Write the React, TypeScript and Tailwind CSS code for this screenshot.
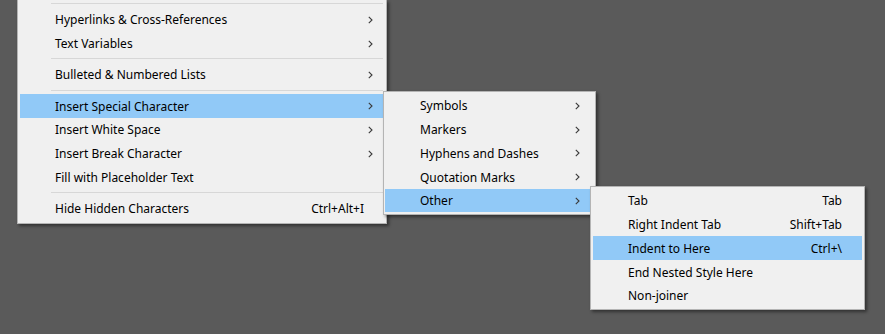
import React from "react";

type Item =
  | { type: "sep" }
  | { type: "item"; label: string; sub?: boolean; shortcut?: string; active?: boolean };

const Chevron = () => (
  <svg width="5" height="8" viewBox="0 0 5 8" className="block -mt-[1px]">
    <path d="M0.8 0.8 L4 4 L0.8 7.2" fill="none" stroke="#3a3a3a" strokeWidth="1.1" />
  </svg>
);

function Row({ it, padL, arrowR }: { it: Extract<Item, { type: "item" }>; padL: string; arrowR: string }) {
  return (
    <div
      className={`flex h-[23.75px] items-center pt-[2px] ${padL} ${arrowR} ${
        it.active ? "bg-[#91c9f7]" : ""
      }`}
    >
      <span className="flex-1 whitespace-nowrap">{it.label}</span>
      {it.shortcut && <span className="whitespace-nowrap">{it.shortcut}</span>}
      {it.sub && <Chevron />}
    </div>
  );
}

const mainItems: Item[] = [
  { type: "item", label: "Hyperlinks & Cross-References", sub: true },
  { type: "item", label: "Text Variables", sub: true },
  { type: "sep" },
  { type: "item", label: "Bulleted & Numbered Lists", sub: true },
  { type: "sep" },
  { type: "item", label: "Insert Special Character", sub: true, active: true },
  { type: "item", label: "Insert White Space", sub: true },
  { type: "item", label: "Insert Break Character", sub: true },
  { type: "item", label: "Fill with Placeholder Text" },
  { type: "sep" },
  { type: "item", label: "Hide Hidden Characters", shortcut: "Ctrl+Alt+I" },
];

const sub1: Item[] = [
  { type: "item", label: "Symbols", sub: true },
  { type: "item", label: "Markers", sub: true },
  { type: "item", label: "Hyphens and Dashes", sub: true },
  { type: "item", label: "Quotation Marks", sub: true },
  { type: "item", label: "Other", sub: true, active: true },
];

const sub2: Item[] = [
  { type: "item", label: "Tab", shortcut: "Tab" },
  { type: "item", label: "Right Indent Tab", shortcut: "Shift+Tab" },
  { type: "item", label: "Indent to Here", shortcut: "Ctrl+\\", active: true },
  { type: "item", label: "End Nested Style Here" },
  { type: "item", label: "Non-joiner" },
];

const Sep = ({ left }: { left: string }) => (
  <div className={`flex h-[7.5px] items-center ${left} pr-[1px]`}>
    <div className="h-px w-full bg-[#d7d7d7]" />
  </div>
);

export default function App() {
  return (
    <div
      className="relative h-[334px] w-[885px] overflow-hidden bg-[#5a5a5a] text-[12px] text-black"
      style={{ fontFamily: '"Segoe UI", "Noto Sans", "Open Sans", sans-serif' }}
    >
      {/* main menu */}
      <div className="absolute left-[17px] top-0 w-[370px] border-x border-b border-[#b4b4b4] bg-[#f0f0f0] px-[2px] pb-[2.5px] shadow-[2px_2px_3px_rgba(0,0,0,0.45)]">
        <Sep left="pl-[31px]" />
        {mainItems.map((it, i) =>
          it.type === "sep" ? (
            <Sep key={i} left="pl-[31px]" />
          ) : (
            <Row key={i} it={it} padL="pl-[35px]" arrowR={it.shortcut ? "pr-[20px]" : "pr-[11px]"} />
          )
        )}
      </div>

      {/* submenu 1 */}
      <div className="absolute left-[383px] top-[91px] w-[213px] border border-[#b4b4b4] bg-[#f0f0f0] px-[1px] py-[1.5px] shadow-[2px_2px_3px_rgba(0,0,0,0.45)]">
        {sub1.map((it, i) =>
          it.type === "sep" ? (
            <Sep key={i} left="pl-[31px]" />
          ) : (
            <Row key={i} it={it} padL="pl-[35px]" arrowR="pr-[14px]" />
          )
        )}
      </div>

      {/* submenu 2 */}
      <div className="absolute left-[590px] top-[186px] w-[275px] border border-[#b4b4b4] bg-[#f0f0f0] px-[2px] py-[1.5px] shadow-[2px_2px_3px_rgba(0,0,0,0.45)]">
        {sub2.map((it, i) =>
          it.type === "sep" ? (
            <Sep key={i} left="pl-[31px]" />
          ) : (
            <Row key={i} it={it} padL="pl-[35px]" arrowR="pr-[20px]" />
          )
        )}
      </div>
    </div>
  );
}
